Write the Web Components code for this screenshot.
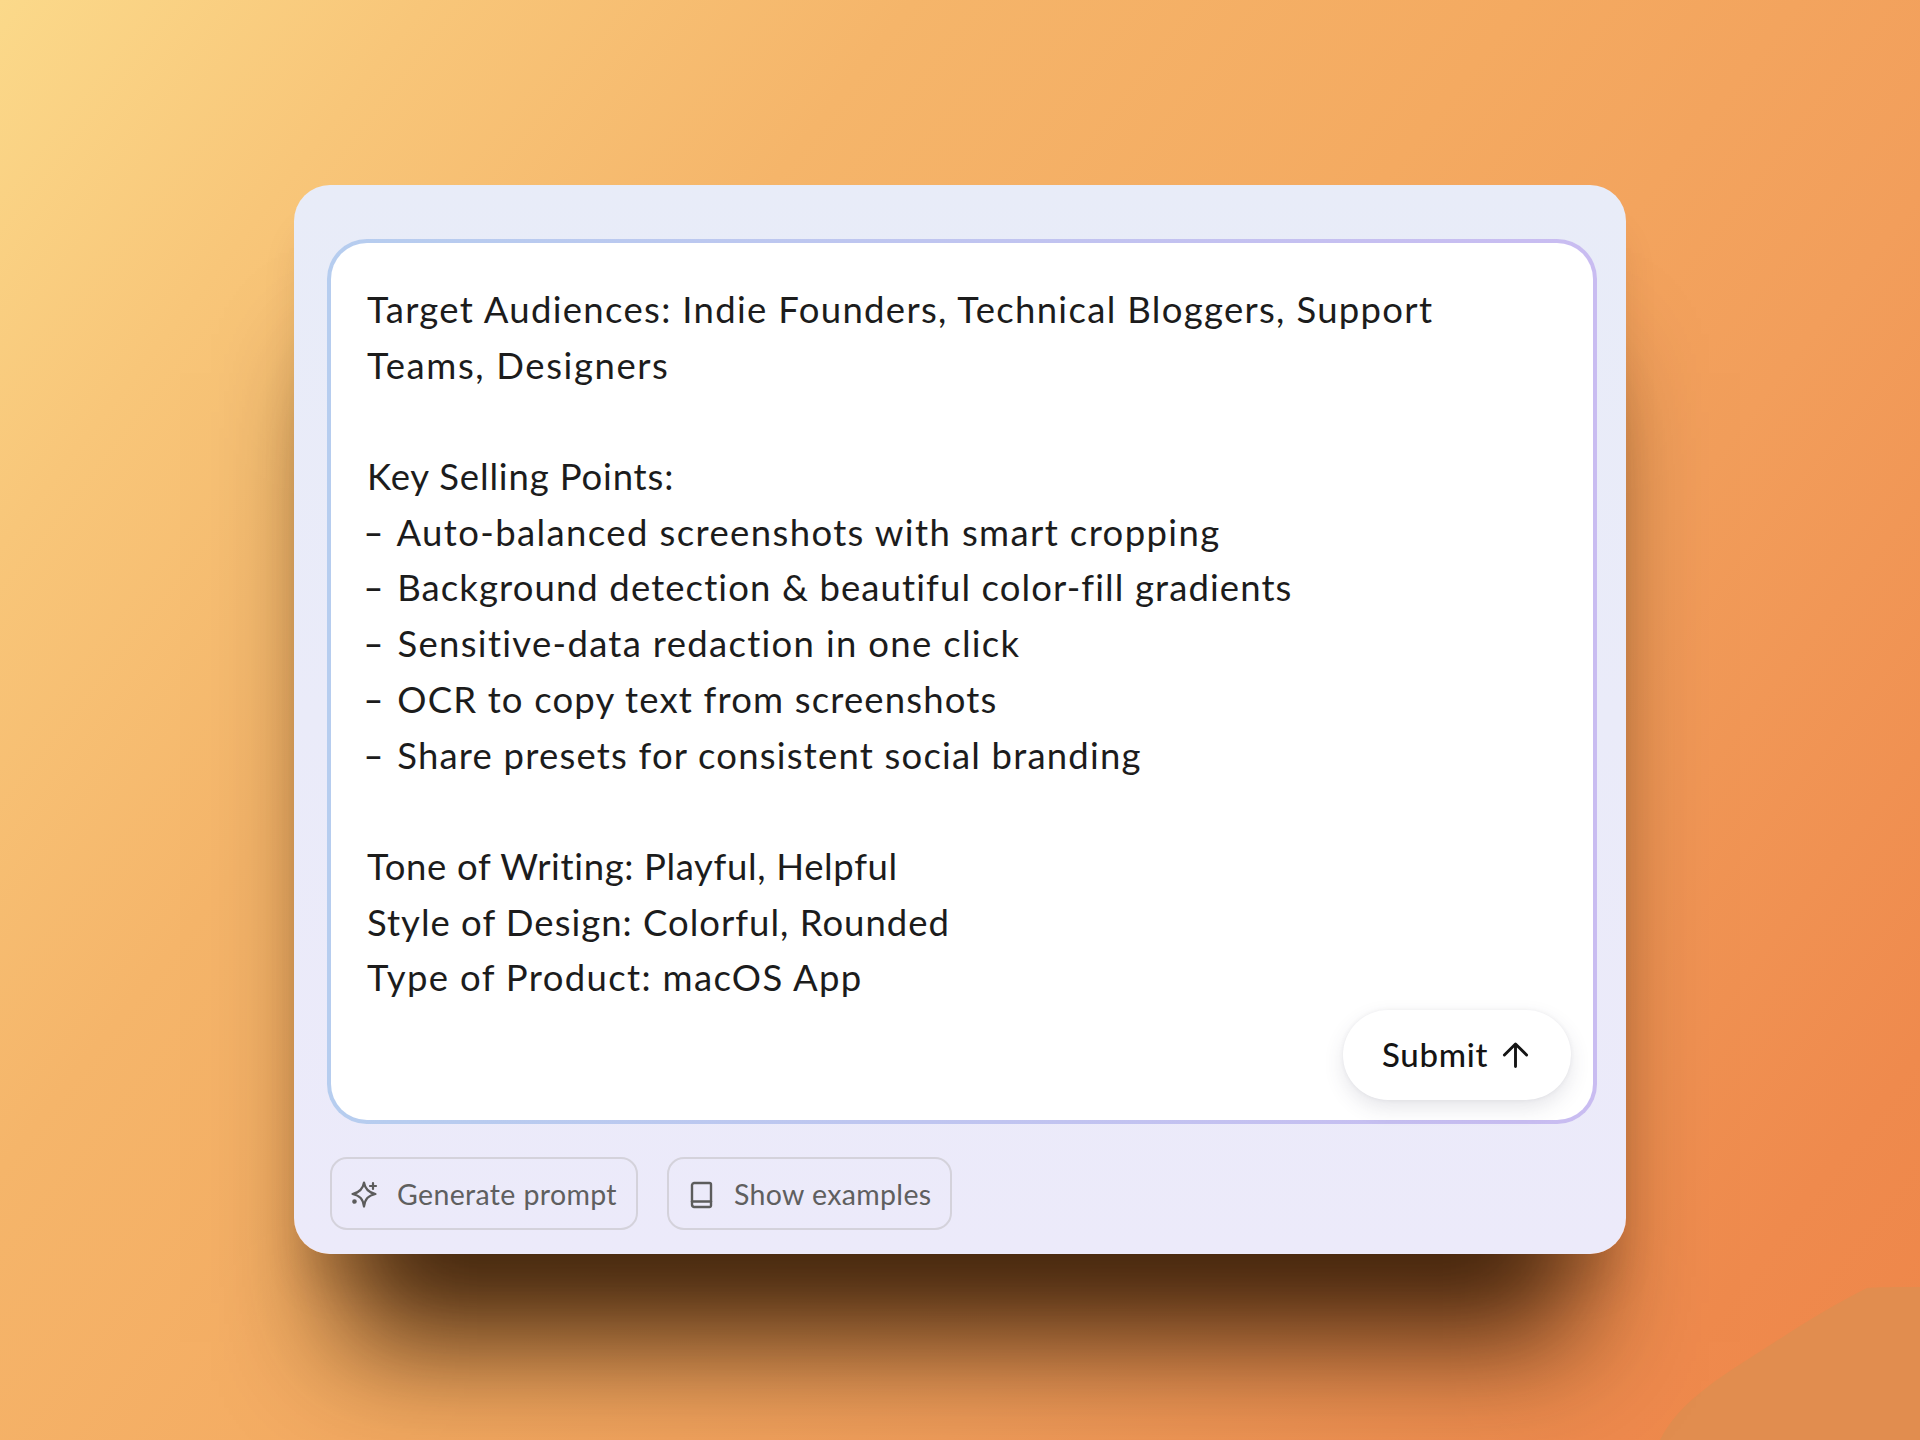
<!DOCTYPE html>
<html><head><meta charset="utf-8">
<style>
html,body{margin:0;padding:0}
body{width:1920px;height:1440px;overflow:hidden;font-family:"Lato","Noto Sans",sans-serif;font-variant-ligatures:none}
</style></head><body>
<prompt-page>
<prompt-card>
<prompt-editor>
<text-line ls="1.32">Target Audiences: Indie Founders, Technical Bloggers, Support</text-line>
<text-line ls="1.6">Teams, Designers</text-line>
<text-line></text-line>
<text-line ls=".85">Key Selling Points:</text-line>
<text-line ls="1.38" dash>Auto-balanced screenshots with smart cropping</text-line>
<text-line ls="1.1" dash>Background detection &amp; beautiful color-fill gradients</text-line>
<text-line ls="1.3" dash>Sensitive-data redaction in one click</text-line>
<text-line ls="1.16" dash>OCR to copy text from screenshots</text-line>
<text-line ls="1.19" dash>Share presets for consistent social branding</text-line>
<text-line></text-line>
<text-line ls=".65">Tone of Writing: Playful, Helpful</text-line>
<text-line ls="1">Style of Design: Colorful, Rounded</text-line>
<text-line ls="1.35">Type of Product: macOS App</text-line>
</prompt-editor>
<prompt-tools>
<tool-button label="Generate prompt" icon="spark" style="width:308px"></tool-button>
<tool-button label="Show examples" icon="book" style="width:285px"></tool-button>
</prompt-tools>
</prompt-card>
</prompt-page>
<script>
function def(name,html){customElements.define(name,class extends HTMLElement{constructor(){super();this.attachShadow({mode:'open'}).innerHTML=html;}})}
def('prompt-page',`<style>:host{display:flex;justify-content:center;align-items:flex-start;box-sizing:border-box;width:1920px;height:1440px;padding-top:185px;position:relative;overflow:hidden;
background:linear-gradient(128deg,#fbd98a 0%,#f8c679 14%,#f5b56a 30%,#f4aa61 50%,#f29e5b 68%,#ef8a4d 90%,#ee8649 100%)}
svg{position:absolute;right:0;bottom:0}
</style><svg width="260" height="153" viewBox="0 0 260 153"><path d="M0 153C20 112 70 84 107 60S173 18 207 1C215 0 240 0 260 0V153Z" fill="#e18d4f"/></svg><slot></slot>`);
def('prompt-card',`<style>:host{display:flex;flex-direction:column;gap:33px;box-sizing:border-box;width:1332px;height:1069px;padding:54px 29px 0 33px;border-radius:36px;position:relative;
background:linear-gradient(180deg,#e8ecf8,#eceafa);
box-shadow:0 138px 110px -50px rgba(50,25,5,.9),0 40px 40px -10px rgba(70,35,10,.15)}
</style><slot></slot>`);
def('prompt-editor',`<style>:host{display:block;box-sizing:border-box;height:885px;border:4px solid transparent;border-radius:40px;position:relative;padding:39px 36px 0;
background:linear-gradient(#fff,#fff) padding-box,linear-gradient(90deg,#b6cdef,#c9bcf1) border-box;
font-size:36.500px;line-height:55.700px;color:#1c1c1c}
.s{position:absolute;left:1012px;top:767px;box-sizing:border-box;width:228px;height:90px;padding-right:3px;border-radius:45px;background:#fff;display:flex;align-items:center;justify-content:center;gap:14px;font-size:33px;letter-spacing:.7px;font-weight:500;color:#141414;
box-shadow:0 8px 20px rgba(60,60,90,.13),0 0 4px rgba(60,60,90,.08)}
svg{display:block}</style><slot></slot>
<div class="s"><span>Submit</span><svg width="27" height="28" viewBox="0 0 28 28" fill="none" stroke="#141414" stroke-width="3" stroke-linecap="round" stroke-linejoin="round"><path d="M14 26V3M2.500 14 14 2.500 25.500 14"/></svg></div>`);
customElements.define('text-line',class extends HTMLElement{constructor(){super();const s=this.attachShadow({mode:'open'});
const ls=this.getAttribute('ls')||'1.3';
s.innerHTML=`<style>:host{display:block;height:55.700px;white-space:pre;letter-spacing:${ls}px}.d{display:inline-block;transform:scaleX(1.5);margin-right:5px}</style>${this.hasAttribute('dash')?'<span class="d">-</span> ':''}<slot></slot>`;}});
def('prompt-tools',`<style>:host{display:flex;gap:29px;padding-left:3px}</style><slot></slot>`);
const icons={
spark:`<svg width="30" height="30" viewBox="0 0 30 30" fill="none" stroke="#5c5c5c" stroke-width="2.200" stroke-linejoin="round" stroke-linecap="round"><path d="M13 3.500C14 10 17 13.500 24.500 15 17 16.500 14 20 13 27.500 12 20 9 16.500 1.500 15 9 13.500 12 10 13 3.500Z"/><path d="M22 4V10M19 7H25"/><circle cx="3.500" cy="22.500" r="1.200" fill="#5c5c5c"/></svg>`,
book:`<svg width="30" height="30" viewBox="0 0 30 30" fill="none" stroke="#5c5c5c" stroke-width="2.400" stroke-linejoin="round" stroke-linecap="round"><path d="M6 4H21.500A1.500 1.500 0 0 1 23 5.500V26.500A1.500 1.500 0 0 1 21.500 28H6A2.500 2.500 0 0 1 4 25.500V6A2.500 2.500 0 0 1 6 4Z"/><path d="M4 22.500H23"/></svg>`};
customElements.define('tool-button',class extends HTMLElement{constructor(){super();const s=this.attachShadow({mode:'open'});
s.innerHTML=`<style>:host{display:flex;align-items:center;gap:16px;box-sizing:border-box;height:73px;padding-left:19px;border:2px solid #d4d2db;border-radius:17px;font-size:28.500px;color:#5f5f5f;letter-spacing:.35px}svg{display:block}</style>${icons[this.getAttribute('icon')]}<span>${this.getAttribute('label')}</span>`;}});
</script></body></html>
